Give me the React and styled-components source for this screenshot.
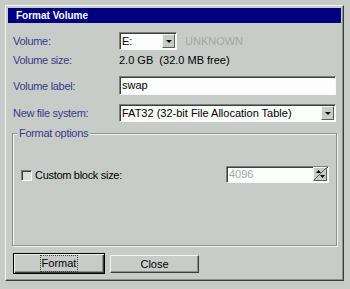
import React from 'react';
import styled, { createGlobalStyle } from 'styled-components';

const GlobalStyle = createGlobalStyle`
  html, body {
    margin: 0;
    padding: 0;
    background: #c8ccc8;
  }
  body {
    font-family: "Liberation Sans", Arial, sans-serif;
    font-size: 11px;
    color: #000;
  }
`;

const Page = styled.div`
  width: 350px;
  height: 289px;
  box-sizing: border-box;
  padding: 5px 0 0 5px;
`;

const Window = styled.div`
  width: 339px;
  height: 276px;
  box-sizing: border-box;
  border: 1px solid;
  border-color: #f4f6f4 #3c3e3c #3c3e3c #f4f6f4;
  box-shadow: inset -1px -1px 0 #8c908c;
  padding: 2px;
  display: flex;
  flex-direction: column;
`;

const TitleBar = styled.div`
  height: 15px;
  flex: none;
  background: #000080;
  color: #fff;
  font-weight: bold;
  font-size: 10px;
  padding-left: 8px;
  display: flex;
  align-items: center;
`;

const Body = styled.div`
  flex: 1;
  padding: 9px 4px 0 4px;
  display: flex;
  flex-direction: column;
`;

const Row = styled.div`
  display: grid;
  grid-template-columns: 107px 1fr;
  align-items: center;
  height: ${(p) => p.$h || 18}px;
  margin-top: ${(p) => p.$top || 0}px;
  padding-right: 1px;
`;

const Label = styled.div`
  color: #38388a;
  padding-left: 1px;
  letter-spacing: -0.3px;
`;

const Value = styled.div`
  white-space: pre;
`;

const Field = styled.div`
  display: flex;
  align-items: center;
  gap: 8px;
`;

const Sunken = styled.div`
  box-sizing: border-box;
  height: ${(p) => p.$h || 18}px;
  width: ${(p) => (p.$w ? `${p.$w}px` : '100%')};
  border: 1px solid;
  border-color: #7c807c #f8faf8 #f8faf8 #7c807c;
  box-shadow: inset 1px 1px 0 #3c3e3c;
  background: #fcfdfc;
  display: flex;
  align-items: center;
  padding: 0 1px 1px 2px;
`;

const FieldText = styled.span`
  flex: 1;
  white-space: nowrap;
  overflow: hidden;
  color: ${(p) => (p.$disabled ? '#a4a8a4' : '#000')};
  text-shadow: ${(p) => (p.$disabled ? '1px 1px 0 #fff' : 'none')};
`;

const DropButton = styled.div`
  width: 13px;
  height: 14px;
  margin-top: 1px;
  box-sizing: border-box;
  background: #c8ccc8;
  border: 1px solid;
  border-color: #f4f6f4 #5c5e5c #5c5e5c #f4f6f4;
  display: flex;
  align-items: center;
  justify-content: center;
`;

const Arrow = styled.span`
  width: 0;
  height: 0;
  border-left: 3px solid transparent;
  border-right: 3px solid transparent;
  border-top: 3px solid #000;
`;

const Muted = styled.span`
  color: #a4a8a4;
`;

const Group = styled.div`
  position: relative;
  margin-top: 11px;
  height: 113px;
  border: 1px solid #8c908c;
  box-shadow: inset 1px 1px 0 #f4f6f4, 1px 1px 0 #f4f6f4;
  padding: 32px 7px 0 8px;
  box-sizing: border-box;
`;

const Legend = styled.span`
  position: absolute;
  top: -7px;
  left: 4px;
  padding: 0 2px;
  background: #c8ccc8;
  color: #38388a;
  letter-spacing: -0.3px;
`;

const OptionRow = styled.div`
  display: flex;
  align-items: center;
  height: 17px;
`;

const CheckBox = styled.span`
  width: 11px;
  height: 11px;
  box-sizing: border-box;
  border: 1px solid;
  border-color: #7c807c #f8faf8 #f8faf8 #7c807c;
  box-shadow: inset 1px 1px 0 #3c3e3c;
  background: #dcdedc;
  margin: 1px 3px 0 0;
`;

const OptionText = styled.span`
  letter-spacing: -0.3px;
`;

const Spacer = styled.div`
  flex: 1;
`;

const SpinButton = styled.div`
  width: 14px;
  height: 14px;
  box-sizing: border-box;
  background: #c8ccc8;
  border: 1px solid;
  border-color: #f4f6f4 #5c5e5c #5c5e5c #f4f6f4;
  display: flex;
`;

const Buttons = styled.div`
  display: flex;
  align-items: center;
  gap: 5px;
  margin-top: 7px;
  padding-left: 1px;
`;

const Button = styled.button`
  width: ${(p) => (p.$default ? 92 : 89)}px;
  height: ${(p) => (p.$default ? 21 : 18)}px;
  box-sizing: border-box;
  font: inherit;
  color: #000;
  background: #c8ccc8;
  border: 1px solid;
  border-color: ${(p) => (p.$default ? '#000' : '#f4f6f4 #3c3e3c #3c3e3c #f4f6f4')};
  box-shadow: ${(p) =>
    p.$default
      ? 'inset 1px 1px 0 #f4f6f4, inset -1px -1px 0 #3c3e3c, inset -2px -2px 0 #8c908c'
      : 'inset -1px -1px 0 #8c908c'};
  padding: 0;
  display: flex;
  align-items: center;
  justify-content: center;
`;

const FocusText = styled.span`
  outline: 1px dotted #3c3e3c;
  padding: 1px 1px 2px;
`;

function SpinIcon() {
  return (
    <svg width="12" height="12" viewBox="0 0 12 12">
      <line x1="0" y1="12" x2="12" y2="0" stroke="#5c5e5c" strokeWidth="1" />
      <path d="M2 5 L4.5 2 L7 5 Z" fill="#000" />
      <path d="M6 7 L11 7 L8.5 10 Z" fill="#000" />
    </svg>
  );
}

export default function App() {
  return (
    <Page>
      <GlobalStyle />
      <Window>
        <TitleBar>Format Volume</TitleBar>
        <Body>
          <Row>
            <Label>Volume:</Label>
            <Field>
              <Sunken $w={58}>
                <FieldText>E:</FieldText>
                <DropButton>
                  <Arrow />
                </DropButton>
              </Sunken>
              <Muted>UNKNOWN</Muted>
            </Field>
          </Row>
          <Row $top={1}>
            <Label>Volume size:</Label>
            <Value>2.0 GB  (32.0 MB free)</Value>
          </Row>
          <Row $top={7} $h={19}>
            <Label>Volume label:</Label>
            <Sunken $h={19}>
              <FieldText>swap</FieldText>
            </Sunken>
          </Row>
          <Row $top={9}>
            <Label>New file system:</Label>
            <Sunken>
              <FieldText>FAT32 (32-bit File Allocation Table)</FieldText>
              <DropButton>
                <Arrow />
              </DropButton>
            </Sunken>
          </Row>
          <Group>
            <Legend>Format options</Legend>
            <OptionRow>
              <CheckBox />
              <OptionText>Custom block size:</OptionText>
              <Spacer />
              <Sunken $w={103} $h={17}>
                <FieldText $disabled>4096</FieldText>
                <SpinButton>
                  <SpinIcon />
                </SpinButton>
              </Sunken>
            </OptionRow>
          </Group>
          <Buttons>
            <Button $default>
              <FocusText>Format</FocusText>
            </Button>
            <Button>Close</Button>
          </Buttons>
        </Body>
      </Window>
    </Page>
  );
}
